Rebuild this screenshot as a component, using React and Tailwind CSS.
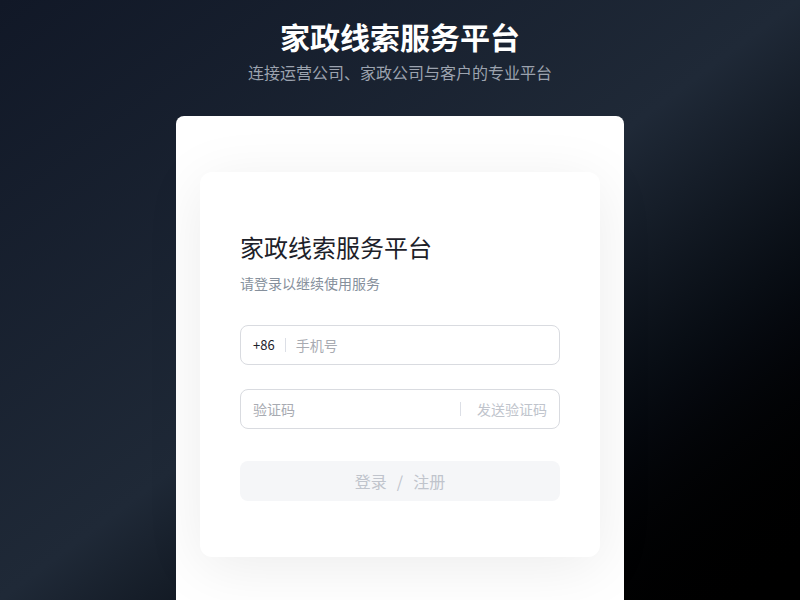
export default function App() {
  return (
    <div
      className="h-[600px] w-[800px] overflow-hidden bg-gradient-to-br from-[#111827] via-[#1f2937] to-black"
      style={{ fontFamily: '"Noto Sans CJK SC", "Noto Sans", sans-serif' }}
    >
      {/* Header */}
      <div className="flex flex-col items-center pt-[18px]">
        <h1 className="text-[30px] font-bold leading-[36px] text-white">家政线索服务平台</h1>
        <p className="mt-[6px] text-[16px] leading-[24px] text-[#9ca3af]">
          连接运营公司、家政公司与客户的专业平台
        </p>
      </div>

      {/* Panel */}
      <div className="mx-auto mt-[32px] w-[448px] rounded-lg bg-white px-6 pt-14 pb-14">
        <div className="rounded-xl bg-white px-10 pt-[59px] pb-14 shadow-[0_10px_60px_rgba(0,0,0,0.08)]">
          <h2 className="text-[24px] leading-[32px] text-[#1d2129]">家政线索服务平台</h2>
          <p className="mt-[10px] text-[14px] leading-[20px] text-[#86909c]">请登录以继续使用服务</p>

          {/* Phone */}
          <div className="mt-8 flex h-10 items-center rounded-lg border border-[#d9dbe0] px-3">
            <span className="text-[13px] text-[#1d2129]">+86</span>
            <span className="mx-[10px] h-[14px] w-px bg-[#dcdfe6]" />
            <span className="text-[14px] text-[#a8abb2]">手机号</span>
          </div>

          {/* Code */}
          <div className="mt-6 flex h-10 items-center rounded-lg border border-[#d9dbe0] pl-3 pr-3">
            <span className="flex-1 text-[14px] text-[#a8abb2]">验证码</span>
            <span className="mr-4 h-[14px] w-px bg-[#dcdfe6]" />
            <span className="text-[14px] text-[#c0c4cc]">发送验证码</span>
          </div>

          {/* Submit */}
          <button className="mt-8 flex h-10 w-full items-center justify-center rounded-lg bg-[#f5f6f8] text-[16px] text-[#c0c4cc]">
            登录<span className="mx-[10px]">/</span>注册
          </button>
        </div>
      </div>
    </div>
  );
}
